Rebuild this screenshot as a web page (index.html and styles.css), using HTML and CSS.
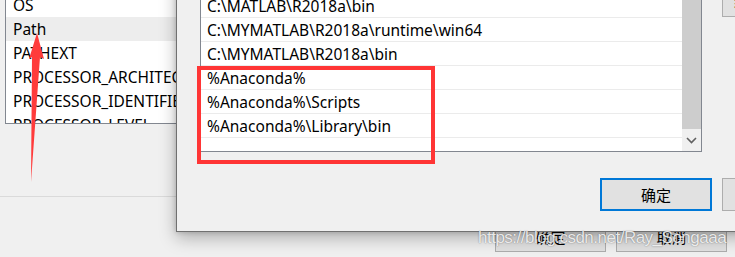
FILE: index.html
```html
<!DOCTYPE html>
<html lang="zh-CN">
<head>
<meta charset="utf-8">
<title>编辑环境变量</title>
<link rel="stylesheet" href="styles.css">
</head>
<body>
<div class="page">
  <div class="env-list">
    <div class="env-row">OS</div>
    <div class="env-row is-selected">Path</div>
    <div class="env-row">PATHEXT</div>
    <div class="env-row">PROCESSOR_ARCHITECTURE</div>
    <div class="env-row">PROCESSOR_IDENTIFIER</div>
    <div class="env-row">PROCESSOR_LEVEL</div>
  </div>
  <div class="separator"></div>
  <div class="bg-actions">
    <button class="win-btn bg-btn">确定</button>
    <button class="win-btn bg-btn">取消</button>
  </div>

  <div class="dialog">
    <div class="dialog-body">
      <div class="path-list">
        <div class="path-rows">
          <div class="path-row">%SystemRoot%\System32\OpenSSH\</div>
          <div class="path-row">C:\MATLAB\R2018a\bin</div>
          <div class="path-row">C:\MYMATLAB\R2018a\runtime\win64</div>
          <div class="path-row">C:\MYMATLAB\R2018a\bin</div>
          <div class="path-row">%Anaconda%</div>
          <div class="path-row">%Anaconda%\Scripts</div>
          <div class="path-row">%Anaconda%\Library\bin</div>
          <div class="path-fill"></div>
        </div>
        <div class="scrollbar">
          <div class="thumb"></div>
          <div class="arrow-down">
            <svg width="11" height="7" viewBox="0 0 11 7"><path d="M1 1 L5.5 5.5 L10 1" fill="none" stroke="#606060" stroke-width="1.6"/></svg>
          </div>
        </div>
      </div>
      <div class="side-buttons">
        <button class="win-btn side-btn">编辑文本(T)...</button>
      </div>
    </div>
    <div class="dialog-actions">
      <button class="win-btn is-default">确定</button>
      <button class="win-btn">取消</button>
    </div>
  </div>

  <div class="highlight-box"></div>
  <svg class="arrow" width="735" height="257" viewBox="0 0 735 257">
    <polygon points="37,33 44,59 40,57 31,182 32,57 29,59" fill="#ff3b3b"/>
  </svg>
  <div class="watermark">https://blog.csdn.net/Ray_Songaaa</div>
</div>
</body>
</html>
```
FILE: styles.css
```css
html, body {
  margin: 0;
  padding: 0;
}
body {
  background: #f0f0f0;
  font-family: "Noto Sans", "Noto Sans CJK SC", sans-serif;
  font-size: 15.5px;
  color: #000;
}
.page {
  position: relative;
  width: 735px;
  height: 257px;
  overflow: hidden;
  background: #f0f0f0;
}
.env-list {
  margin: -8px 0 0 5px;
  width: 300px;
  height: 130px;
  background: #fff;
  border: 1px solid #828790;
  overflow: hidden;
}
.env-row {
  height: 24px;
  line-height: 25px;
  padding-left: 7px;
  white-space: nowrap;
}
.env-row.is-selected {
  background: #ededed;
}
.separator {
  margin-top: 72px;
  height: 1px;
  background: #dadada;
}
.bg-actions {
  display: flex;
  justify-content: flex-end;
  gap: 10px;
  margin-top: 24px;
  padding-right: 8px;
}
.win-btn {
  font-family: "Noto Sans CJK SC", "Noto Sans", sans-serif;
  font-size: 15px;
  color: #000;
  background: #e1e1e1;
  border: 1px solid #adadad;
  width: 112px;
  height: 33px;
  padding: 0;
  margin: 0;
  line-height: 1;
}
.bg-btn {
  width: 111px;
  height: 31px;
  font-size: 15px;
}
.dialog {
  position: absolute;
  left: 176px;
  top: -60px;
  width: 690px;
  height: 290px;
  background: #f0f0f0;
  border: 1px solid #707070;
  box-shadow: 0 6px 16px rgba(0, 0, 0, 0.28), 0 0 5px rgba(0, 0, 0, 0.18);
  display: flex;
  flex-direction: column;
}
.dialog-body {
  display: flex;
  padding: 28px 0 0 23px;
  gap: 20px;
}
.path-list {
  display: flex;
  width: 500px;
  height: 181px;
  border: 1px solid #828790;
  background: #fff;
}
.path-rows {
  flex: 1;
  display: flex;
  flex-direction: column;
}
.path-row {
  height: 23px;
  line-height: 25px;
  border-bottom: 1px solid #ebebeb;
  padding-left: 6px;
  white-space: nowrap;
  overflow: hidden;
}
.path-fill {
  flex: 1;
}
.scrollbar {
  width: 19px;
  display: flex;
  flex-direction: column;
  background: #f0f0f0;
}
.thumb {
  flex: 1;
  background: #cdcdcd;
}
.arrow-down {
  height: 22px;
  display: flex;
  align-items: center;
  justify-content: center;
}
.side-buttons {
  display: flex;
  flex-direction: column;
  padding-top: 15px;
}
.side-btn {
  text-align: left;
  padding-left: 11px;
  white-space: nowrap;
}
.dialog-actions {
  display: flex;
  gap: 10px;
  padding: 26px 0 0 423px;
}
.win-btn.is-default {
  border: 2px solid #0078d7;
}
.highlight-box {
  position: absolute;
  left: 197px;
  top: 66px;
  width: 230px;
  height: 90px;
  border: 4px solid #ff3535;
}
.arrow {
  position: absolute;
  left: 0;
  top: 0;
}
.watermark {
  position: absolute;
  left: 478px;
  top: 228px;
  font-family: "Liberation Sans", Arial, sans-serif;
  font-size: 17px;
  letter-spacing: -0.5px;
  color: rgba(255, 255, 255, 0.85);
  text-shadow: 0 0 1px rgba(0, 0, 0, 0.35), 0 0 2px rgba(0, 0, 0, 0.2);
  white-space: nowrap;
}
```
